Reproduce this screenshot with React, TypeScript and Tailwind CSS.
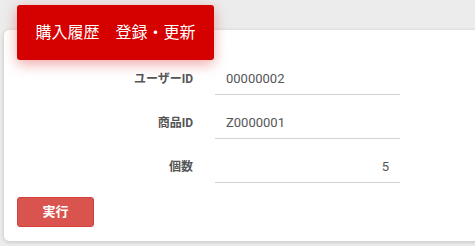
export default function App() {
  const rows = [
    { label: "ユーザーID", value: "00000002", align: "text-left" },
    { label: "商品ID", value: "Z0000001", align: "text-left" },
    { label: "個数", value: "5", align: "text-right" },
  ];

  return (
    <div className="w-[475px] h-[246px] overflow-hidden bg-[#ececec] pt-[30px] pl-[4px] font-['Roboto','Noto_Sans_CJK_JP',sans-serif]">
      {/* Card */}
      <div className="flow-root w-[490px] h-[211px] bg-white rounded-[5px] shadow-[0_1px_4px_rgba(0,0,0,0.18)] px-[13px]">
        {/* Header */}
        <div className="-mt-[25px] w-[197px] h-[55px] bg-[#d50000] rounded-[3px] shadow-[0_4px_14px_rgba(213,0,0,0.35)] flex items-center justify-center text-white text-[16px] leading-none">
          購入履歴　登録・更新
        </div>

        {/* Form */}
        <div className="mt-[3px] flex flex-col gap-[12px]">
          {rows.map((row) => (
            <div key={row.label} className="flex items-center">
              <div className="w-[176px] text-right text-[12px] font-bold text-[#555]">
                {row.label}
              </div>
              <div
                className={`ml-[22px] w-[185px] h-[32px] border-b border-[#d2d2d2] px-[11px] flex items-center text-[13px] text-[#555] ${
                  row.align === "text-right" ? "justify-end" : "justify-start"
                }`}
              >
                {row.value}
              </div>
            </div>
          ))}
        </div>

        {/* Submit */}
        <button className="mt-[14px] w-[77px] h-[30px] bg-[#d9534f] border border-[#d43f3a] rounded-[3px] text-white text-[13px] font-bold">
          実行
        </button>
      </div>
    </div>
  );
}
